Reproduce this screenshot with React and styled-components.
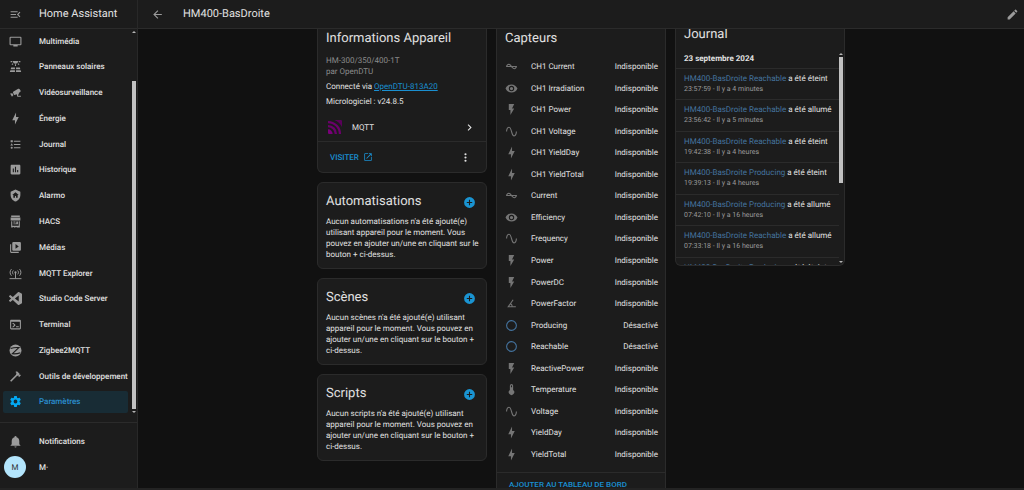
import React from 'react';
import styled, { createGlobalStyle } from 'styled-components';

const icons = {
  menuOpen: 'M21,15.61L19.59,17L14.58,12L19.59,7L21,8.39L17.44,12L21,15.61M3,6H16V8H3V6M3,13V11H13V13H3M3,18V16H16V18H3Z',
  arrowLeft: 'M20,11V13H8L13.5,18.5L12.08,19.92L4.16,12L12.08,4.08L13.5,5.5L8,11H20Z',
  pencil: 'M20.71,7.04C21.1,6.65 21.1,6 20.71,5.63L18.37,3.29C18,2.9 17.35,2.9 16.96,3.29L15.12,5.12L18.87,8.87M3,17.25V21H6.75L17.81,9.93L14.06,6.18L3,17.25Z',
  television: 'M21,17H3V5H21M21,3H3A2,2 0 0,0 1,5V17A2,2 0 0,0 3,19H8V21H16V19H21A2,2 0 0,0 23,17V5A2,2 0 0,0 21,3Z',
  solar: 'M4 14H11V17H3L4 14M13 14H20L21 17H13V14M2.500 19H11V22H1.500L2.500 19M13 19H21.500L22.500 22H13V19M11 8H13V11H11V8M15.76 7.21L17.18 5.79L19.3 7.91L17.89 9.33L15.76 7.21M4.71 7.91L6.83 5.79L8.24 7.21L6.12 9.33L4.71 7.91M3 2H6V4H3V2M18 2H21V4H18V2M12 7C14.76 7 17 4.76 17 2H7C7 4.76 9.24 7 12 7Z',
  cctv: 'M18.15,4.94C17.77,4.91 17.37,5 17,5.2L8.35,10.2C7.39,10.76 7.07,12 7.62,12.94L9.12,15.53C9.67,16.5 10.89,16.82 11.85,16.27L13.65,15.23C13.92,15.69 14.32,16.06 14.81,16.27V18.04C14.81,19.13 15.7,20 16.81,20H22V18.04H16.81V16.27C17.72,15.87 18.31,14.97 18.31,14C18.31,13.54 18.19,13.11 17.97,12.73L20.5,11.27C21.47,10.71 21.8,9.5 21.24,8.53L19.74,5.94C19.4,5.34 18.79,5 18.15,4.94M6.22,13.17L2,13.87L2.75,15.17L4.75,18.63L5.5,19.93L8.22,16.63L6.22,13.17Z',
  bolt: 'M11 15H6L13 1V9H18L11 23V15Z',
  list: 'M5,9.5L7.5,14H2.5L5,9.5M3,4H7V8H3V4M5,20A2,2 0 0,0 7,18A2,2 0 0,0 5,16A2,2 0 0,0 3,18A2,2 0 0,0 5,20M9,5V7H21V5H9M9,19H21V17H9V19M9,13H21V11H9V13Z',
  chart: 'M9 17H7V10H9V17M13 17H11V7H13V17M17 17H15V13H17V17M19 3H5C3.9 3 3 3.9 3 5V19C3 20.1 3.9 21 5 21H19C20.1 21 21 20.1 21 19V5C21 3.9 20.1 3 19 3Z',
  shield: 'M11,13H13V16H16V11H18L12,6L6,11H8V16H11V13M12,1L21,5V11C21,16.55 17.16,21.74 12,23C6.84,21.74 3,16.55 3,11V5L12,1Z',
  hacs: 'M4,1H20V3.5H4V1M3,4.5H21V10H3V4.5M4,11.5H6V20H18V11.5H20V22H4V11.5M8,12H12V14H8V12M13.5,12H16.5V17H8V15.5H13.5V12M4,23H7V24H4V23M9,23H12V24H9V23M14,23H20V24H14V23Z',
  media: 'M4,6H2V20A2,2 0 0,0 4,22H18V20H4V6M20,2H8A2,2 0 0,0 6,4V16A2,2 0 0,0 8,18H20A2,2 0 0,0 22,16V4A2,2 0 0,0 20,2M12,14.5V5.5L18,10L12,14.5Z',
  code: 'M23.15 2.587L18.21 .21a1.494 1.494 0 0 0-1.705.29l-9.46 8.63-4.12-3.128a.999.999 0 0 0-1.276.057L.327 7.261A1 1 0 0 0 .326 8.74L3.899 12 .326 15.26a1 1 0 0 0 .001 1.479L1.65 17.94a.999.999 0 0 0 1.276.057l4.12-3.128 9.46 8.63a1.492 1.492 0 0 0 1.704.29l4.942-2.377A1.5 1.5 0 0 0 24 20.06V3.939a1.5 1.5 0 0 0-.85-1.352zm-5.146 14.861L10.826 12l7.178-5.448v10.896z',
  console: 'M20,19V7H4V19H20M20,3A2,2 0 0,1 22,5V19A2,2 0 0,1 20,21H4A2,2 0 0,1 2,19V5C2,3.89 2.9,3 4,3H20M13,17V15H18V17H13M9.58,13L5.57,9H8.4L11.7,12.3C12.09,12.69 12.09,13.33 11.7,13.72L8.42,17H5.59L9.58,13Z',
  hammer: 'M2,19.63L13.43,8.2L12.72,7.5L14.14,6.07L12,3.89C13.2,2.7 15.09,2.7 16.27,3.89L19.87,7.5L18.45,8.91H21.29L22,9.62L18.45,13.21L17.74,12.5V9.62L16.27,11.04L15.56,10.33L4.13,21.76L2,19.63Z',
  cog: 'M12,15.5A3.5,3.5 0 0,1 8.5,12A3.5,3.5 0 0,1 12,8.5A3.5,3.5 0 0,1 15.5,12A3.5,3.5 0 0,1 12,15.5M19.43,12.97C19.47,12.65 19.5,12.33 19.5,12C19.5,11.67 19.47,11.34 19.43,11L21.54,9.37C21.73,9.22 21.78,8.95 21.66,8.73L19.66,5.27C19.54,5.05 19.27,4.96 19.05,5.05L16.56,6.05C16.04,5.66 15.5,5.32 14.87,5.07L14.5,2.42C14.46,2.18 14.25,2 14,2H10C9.75,2 9.54,2.18 9.5,2.42L9.13,5.07C8.5,5.32 7.96,5.66 7.44,6.05L4.95,5.05C4.73,4.96 4.46,5.05 4.34,5.27L2.34,8.73C2.21,8.95 2.27,9.22 2.46,9.37L4.57,11C4.53,11.34 4.5,11.67 4.5,12C4.5,12.33 4.53,12.65 4.57,12.97L2.46,14.63C2.27,14.78 2.21,15.05 2.34,15.27L4.34,18.73C4.46,18.95 4.73,19.03 4.95,18.95L7.44,17.94C7.96,18.34 8.5,18.68 9.13,18.93L9.5,21.58C9.54,21.82 9.75,22 10,22H14C14.25,22 14.46,21.82 14.5,21.58L14.87,18.93C15.5,18.67 16.04,18.34 16.56,17.94L19.05,18.95C19.27,19.03 19.54,18.95 19.66,18.73L21.66,15.27C21.78,15.05 21.73,14.78 21.54,14.63L19.43,12.97Z',
  bell: 'M21,19V20H3V19L5,17V11C5,7.9 7.03,5.17 10,4.29C10,4.19 10,4.1 10,4A2,2 0 0,1 12,2A2,2 0 0,1 14,4C14,4.1 14,4.19 14,4.29C16.97,5.17 19,7.9 19,11V17L21,19M14,21A2,2 0 0,1 12,23A2,2 0 0,1 10,21',
  current: 'M12.43 11C12.28 10.84 10 7 7 7S2.32 10.18 2 11V13H11.57C11.72 13.16 14 17 17 17S21.68 13.82 22 13V11H12.43M7 9C8.17 9 9.18 9.85 10 11H4.31C4.78 10.17 5.54 9 7 9M17 15C15.83 15 14.82 14.15 14 13H19.69C19.22 13.83 18.46 15 17 15Z',
  eye: 'M12,9A3,3 0 0,0 9,12A3,3 0 0,0 12,15A3,3 0 0,0 15,12A3,3 0 0,0 12,9M12,17A5,5 0 0,1 7,12A5,5 0 0,1 12,7A5,5 0 0,1 17,12A5,5 0 0,1 12,17M12,4.5C7,4.5 2.73,7.61 1,12C2.73,16.39 7,19.5 12,19.5C17,19.5 21.27,16.39 23,12C21.27,7.61 17,4.5 12,4.5Z',
  flash: 'M7,2V13H10V22L17,10H13L17,2H7Z',
  sine: 'M16.5,21C13.5,21 12.31,16.76 11.05,12.28C10.14,9.04 9,5 7.5,5C4.11,5 4,11.93 4,12H2C2,11.63 2.06,3 7.5,3C10.5,3 11.71,7.25 12.97,11.74C13.83,14.8 15,19 16.5,19C19.94,19 20.03,12.07 20.03,12H22.03C22.03,12.37 21.97,21 16.5,21Z',
  angle: 'M20,19H4.09L14.18,4.43L15.82,5.57L11.28,12.13C12.89,12.96 14,14.62 14,16.54C14,16.7 14,16.85 13.97,17H20V19M7.91,17H11.96C12,16.85 12,16.7 12,16.54C12,15.28 11.24,14.22 10.14,13.78L7.91,17Z',
  circle: 'M12,20A8,8 0 0,1 4,12A8,8 0 0,1 12,4A8,8 0 0,1 20,12A8,8 0 0,1 12,20M12,2A10,10 0 0,0 2,12A10,10 0 0,0 12,22A10,10 0 0,0 22,12A10,10 0 0,0 12,2Z',
  thermometer: 'M15 13V5A3 3 0 0 0 9 5V13A5 5 0 1 0 15 13M12 4A1 1 0 0 1 13 5V8H11V5A1 1 0 0 1 12 4Z',
  open: 'M14,3V5H17.59L7.76,14.83L9.17,16.24L19,6.41V10H21V3M19,19H5V5H12V3H5C3.89,3 3,3.9 3,5V19A2,2 0 0,0 5,21H19A2,2 0 0,0 21,19V12H19V19Z',
  plus: 'M17,13H13V17H11V13H7V11H11V7H13V11H17M12,2A10,10 0 0,0 2,12A10,10 0 0,0 12,22A10,10 0 0,0 22,12A10,10 0 0,0 12,2Z',
  chevron: 'M8.59,16.58L13.17,12L8.59,7.41L10,6L16,12L10,18L8.59,16.58Z',
  dots: 'M12,16A2,2 0 0,1 14,18A2,2 0 0,1 12,20A2,2 0 0,1 10,18A2,2 0 0,1 12,16M12,10A2,2 0 0,1 14,12A2,2 0 0,1 12,14A2,2 0 0,1 10,12A2,2 0 0,1 12,10M12,4A2,2 0 0,1 14,6A2,2 0 0,1 12,8A2,2 0 0,1 10,6A2,2 0 0,1 12,4Z',
};

const GlobalStyle = createGlobalStyle`
  * { box-sizing: border-box; }
  body {
    margin: 0;
    background: #111111;
    color: #e1e1e1;
    font-family: Roboto, "Noto Sans", sans-serif;
    font-size: 8px;
    line-height: 11px;
    text-rendering: geometricPrecision;
  }
  h1, h2, h3, p, ul { margin: 0; padding: 0; }
  ul { list-style: none; }
  a { color: inherit; text-decoration: none; }
  button {
    display: flex;
    align-items: center;
    padding: 0;
    border: 0;
    background: none;
    color: inherit;
    font: inherit;
    cursor: pointer;
  }
`;

const Svg = styled.svg`
  flex: none;
  display: block;
  width: ${({ $size }) => $size || 13}px;
  height: ${({ $size }) => $size || 13}px;
  fill: currentColor;
`;

const Page = styled.div`
  display: flex;
  height: 100vh;
  border-bottom: 2px solid #232323;
  overflow: hidden;
`;

const Sidebar = styled.aside`
  flex: none;
  display: flex;
  flex-direction: column;
  width: 138px;
  background: #1c1c1c;
  border-right: 1px solid #282828;
`;

const Bar = styled.header`
  flex: none;
  display: flex;
  align-items: center;
  gap: ${({ $gap }) => $gap}px;
  height: 29px;
  padding: 0 5px 0 ${({ $left }) => $left}px;
  background: #1c1c1c;
  border-bottom: 1px solid #2b2b2b;
  color: #9b9b9b;
`;

const BarTitle = styled.h1`
  flex: 1;
  color: #e1e1e1;
  font-size: 11px;
  font-weight: 400;
  line-height: 16px;
  white-space: nowrap;
`;

const NavBody = styled.div`
  flex: 1;
  display: flex;
  min-height: 0;
  margin: 0 1px 7px 0;
`;

const NavList = styled.ul`
  flex: 1;
  display: flex;
  flex-direction: column;
  justify-content: space-between;
  padding: 1px 4px 2px 3px;
`;

const NavLink = styled.a`
  display: flex;
  align-items: center;
  gap: 17px;
  height: 22px;
  padding-left: 6px;
  border-radius: 2px;
  background: ${({ $active }) => ($active ? '#182c35' : 'none')};
  color: ${({ $active }) => ($active ? '#03a9f4' : '#9b9b9b')};
  white-space: nowrap;
`;

const NavLabel = styled.span`
  color: ${({ $active }) => ($active ? '#2b8fd0' : '#e1e1e1')};
  font-weight: 500;
`;

const SidebarFooter = styled.ul`
  flex: none;
  display: grid;
  gap: 4px;
  padding: 7px 3px 10px;
  border-top: 1px solid #2b2b2b;
`;

const UserLink = styled(NavLink)`
  gap: 13px;
  padding-left: 1px;
`;

const Avatar = styled.span`
  display: grid;
  place-items: center;
  width: 22px;
  height: 22px;
  border-radius: 50%;
  background: #b3e5fc;
  color: #333333;
`;

const Track = styled.div`
  flex: none;
  display: flex;
  flex-direction: column;
  gap: 1px;
  width: 4px;
  padding: 2px 0;
`;

const Arrow = styled.svg`
  flex: none;
  display: block;
  width: 4px;
  height: 2px;
  fill: #b5b5b5;
`;

const Before = styled.div`
  flex: ${({ $grow }) => $grow};
`;

const Thumb = styled.div`
  flex: ${({ $grow }) => $grow};
  background: #c1c1c1;
`;

const Main = styled.main`
  flex: 1;
  display: flex;
  flex-direction: column;
  min-width: 0;
`;

const IconButton = styled.button`
  flex: none;
  color: ${({ $color }) => $color || 'inherit'};
`;

const Columns = styled.div`
  flex: 1;
  display: grid;
  grid-template-columns: repeat(3, minmax(0, 1fr));
  gap: 9px;
  align-items: start;
  width: 100%;
  max-width: 528px;
  min-height: 0;
  margin: 0 auto;
  overflow: hidden;
`;

const Column = styled.div`
  display: grid;
  gap: 9px;
`;

const Card = styled.section`
  background: #1c1c1c;
  border: 1px solid #2b2b2b;
  border-radius: 6px;
  overflow: hidden;
`;

/* scrolled partly under the app bar, so its top edge is cut */
const CutCard = styled(Card)`
  border-top: 0;
  border-top-left-radius: 0;
  border-top-right-radius: 0;
`;

const CardTitle = styled.h2`
  font-size: 13px;
  font-weight: 400;
  line-height: 18px;
`;

const InfoBody = styled.div`
  display: grid;
  gap: 4px;
  padding: 1px 8px 0;
`;

const Model = styled.p`
  margin-top: 3px;
  color: #8b8b8b;
`;

const DeviceLink = styled.a`
  color: #1a8fd0;
  text-decoration: underline;
`;

const Integration = styled.a`
  display: flex;
  align-items: center;
  gap: 10px;
  height: 28px;
  margin-top: 6px;
  padding: 0 10px;
`;

const Grow = styled.span`
  flex: 1;
`;

const CardActions = styled.div`
  display: flex;
  align-items: center;
  justify-content: space-between;
  height: 31px;
  padding: 0 14px 0 12px;
  border-top: 1px solid #2b2b2b;
`;

const ActionLink = styled.a`
  display: flex;
  align-items: center;
  gap: 4px;
  color: #1a8fd0;
  font-weight: 500;
  text-transform: uppercase;
`;

const EmptyCard = styled(Card)`
  padding: 10px 2px 8px 8px;
`;

const EmptyHead = styled.div`
  display: flex;
  align-items: center;
  justify-content: space-between;
  padding-right: 8px;
  margin-bottom: 5px;
`;

const Sensors = styled(CutCard)`
  display: flex;
  flex-direction: column;
`;

const SensorTitle = styled(CardTitle)`
  padding: 1px 8px 0;
`;

const SensorList = styled.ul`
  display: grid;
  grid-auto-rows: 1fr;
  height: 409px;
  margin: 8px 7px 7px 8px;
`;

const Sensor = styled.li`
  display: flex;
  align-items: center;
  gap: 13px;
  color: ${({ $off }) => ($off ? '#44739e' : '#757575')};
`;

const SensorText = styled.span`
  flex: ${({ $grow }) => ($grow ? 1 : 'none')};
  color: #e1e1e1;
`;

const AddRow = styled.div`
  display: flex;
  align-items: center;
  height: 24px;
  padding: 0 12px;
  border-top: 1px solid #2b2b2b;
`;

const LogTitle = styled(CardTitle)`
  padding: 0 8px;
  line-height: 12px;
  margin-bottom: 10px;
`;

const LogBody = styled.div`
  display: flex;
  height: 214px;
  padding-right: 1px;
`;

const LogList = styled.div`
  flex: 1;
  min-width: 0;
  overflow: hidden;
`;

const LogDate = styled.h3`
  padding: 2px 8px 4px;
  font-size: 8px;
  font-weight: 700;
`;

const LogEntries = styled.ul`
  display: grid;
  grid-auto-rows: 1fr;
  height: 220px;
`;

const LogEntry = styled.li`
  padding: 4px 8px 0;
  border-top: 1px solid #2b2b2b;
  white-space: nowrap;
`;

const LogEntity = styled.a`
  color: #44739e;
`;

const LogTime = styled.p`
  color: #9b9b9b;
  font-size: 7px;
`;

const Icon = ({ name, size }) => (
  <Svg $size={size} viewBox="0 0 24 24" aria-hidden="true"><path d={icons[name]} fillRule="evenodd" /></Svg>
);

const AntennaIcon = () => (
  <Svg viewBox="0 0 24 24" aria-hidden="true">
    <g fill="none" stroke="currentColor" strokeWidth="1.8">
      <path d="M4.5,4C1.2,7.5 1.2,12.5 4.5,16M8,6.5C6,8.6 6,11.4 8,13.5M16,6.5C18,8.6 18,11.4 16,13.5M19.5,4C22.8,7.5 22.8,12.5 19.5,16" />
      <path d="M12,11V21M1,21.5H23" />
    </g>
    <circle cx="12" cy="10" r="2" />
  </Svg>
);

const ZigbeeIcon = () => (
  <Svg viewBox="0 0 24 24" aria-hidden="true">
    <circle cx="12" cy="12" r="11" />
    <path d="M3,8.5C8,6.5 13,6 18.5,6.500L6,18C11,18.5 16,18 21,16" fill="none" stroke="#1c1c1c" strokeWidth="2" />
  </Svg>
);

const MqttIcon = () => (
  <Svg $size={14} viewBox="0 0 24 24" aria-hidden="true">
    <path d="M0,16A8,8 0 0 1 8,24H2A2,2 0 0 1 0,22Z" fill="#7a007a" />
    <path d="M0,10.5A13.5,13.5 0 0 1 13.5,24M0,3.5A20.5,20.5 0 0 1 20.5,24" fill="none" stroke="#6b006b" strokeWidth="4" />
    <path d="M11,0H22A2,2 0 0 1 24,2V12A25,25 0 0 0 11,0Z" fill="#5a005a" />
  </Svg>
);

const ScrollBar = ({ before, thumb, after }) => (
  <Track>
    <Arrow viewBox="0 0 4 2"><path d="M0,2L2,0L4,2Z" /></Arrow>
    <Before $grow={before} />
    <Thumb $grow={thumb} />
    <Before $grow={after} />
    <Arrow viewBox="0 0 4 2"><path d="M0,0L2,2L4,0Z" /></Arrow>
  </Track>
);

const navItems = [
  ['Multimédia', 'television'],
  ['Panneaux solaires', 'solar'],
  ['Vidéosurveillance', 'cctv'],
  ['Énergie', 'bolt'],
  ['Journal', 'list'],
  ['Historique', 'chart'],
  ['Alarmo', 'shield'],
  ['HACS', 'hacs'],
  ['Médias', 'media'],
  ['MQTT Explorer', 'antenna'],
  ['Studio Code Server', 'code'],
  ['Terminal', 'console'],
  ['Zigbee2MQTT', 'zigbee'],
  ['Outils de développement', 'hammer'],
  ['Paramètres', 'cog'],
];

const sensors = [
  ['CH1 Current', 'current'],
  ['CH1 Irradiation', 'eye'],
  ['CH1 Power', 'flash'],
  ['CH1 Voltage', 'sine'],
  ['CH1 YieldDay', 'bolt'],
  ['CH1 YieldTotal', 'bolt'],
  ['Current', 'current'],
  ['Efficiency', 'eye'],
  ['Frequency', 'sine'],
  ['Power', 'flash'],
  ['PowerDC', 'flash'],
  ['PowerFactor', 'angle'],
  ['Producing', 'circle'],
  ['Reachable', 'circle'],
  ['ReactivePower', 'flash'],
  ['Temperature', 'thermometer'],
  ['Voltage', 'sine'],
  ['YieldDay', 'bolt'],
  ['YieldTotal', 'bolt'],
];

const logs = [
  ['Reachable', 'a été éteint', '23:57:59 - Il y a 4 minutes'],
  ['Reachable', 'a été allumé', '23:56:42 - Il y a 5 minutes'],
  ['Reachable', 'a été éteint', '19:42:38 - Il y a 4 heures'],
  ['Producing', 'a été éteint', '19:39:13 - Il y a 4 heures'],
  ['Producing', 'a été allumé', '07:42:10 - Il y a 16 heures'],
  ['Reachable', 'a été allumé', '07:33:18 - Il y a 16 heures'],
  ['Producing', 'a été éteint', '07:33:18 - Il y a 16 heures'],
];

const emptyCards = [
  ['Automatisations', 'automatisations'],
  ['Scènes', 'scènes'],
  ['Scripts', 'scripts'],
];

const NavIcon = ({ name }) => {
  if (name === 'antenna') return <AntennaIcon />;
  if (name === 'zigbee') return <ZigbeeIcon />;
  return <Icon name={name} />;
};

const Navigation = () => (
  <Sidebar>
    <Bar as="div" $gap={17} $left={9}>
      <IconButton aria-label="Menu"><Icon name="menuOpen" /></IconButton>
      <BarTitle as="span">Home Assistant</BarTitle>
    </Bar>
    <NavBody>
      <NavList>
        {navItems.map(([label, icon]) => {
          const active = label === 'Paramètres';
          return (
            <li key={label}>
              <NavLink href="#" $active={active}>
                <NavIcon name={icon} />
                <NavLabel $active={active}>{label}</NavLabel>
              </NavLink>
            </li>
          );
        })}
      </NavList>
      <ScrollBar before={46} thumb={330} after={0} />
    </NavBody>
    <SidebarFooter>
      <li><NavLink href="#"><Icon name="bell" /><NavLabel>Notifications</NavLabel></NavLink></li>
      <li><UserLink href="#"><Avatar>M</Avatar><NavLabel>M·</NavLabel></UserLink></li>
    </SidebarFooter>
  </Sidebar>
);

const DeviceInfo = () => (
  <CutCard>
    <InfoBody>
      <CardTitle>Informations Appareil</CardTitle>
      <Model>
        HM-300/350/400-1T
        <br />
        par OpenDTU
      </Model>
      <p>
        Connecté via
        {' '}
        <DeviceLink href="#">OpenDTU-813A20</DeviceLink>
      </p>
      <p>Micrologiciel : v24.8.5</p>
    </InfoBody>
    <Integration href="#">
      <MqttIcon />
      <Grow>MQTT</Grow>
      <Icon name="chevron" />
    </Integration>
    <CardActions>
      <ActionLink href="#">
        Visiter
        <Icon name="open" size={10} />
      </ActionLink>
      <IconButton aria-label="Plus d'options"><Icon name="dots" /></IconButton>
    </CardActions>
  </CutCard>
);

const App = () => (
  <Page>
    <GlobalStyle />
    <Navigation />
    <Main>
      <Bar $gap={19} $left={13}>
        <IconButton aria-label="Retour"><Icon name="arrowLeft" /></IconButton>
        <BarTitle>HM400-BasDroite</BarTitle>
        <IconButton aria-label="Modifier"><Icon name="pencil" /></IconButton>
      </Bar>
      <Columns>
        <Column>
          <DeviceInfo />
          {emptyCards.map(([title, kind]) => (
            <EmptyCard key={title}>
              <EmptyHead>
                <CardTitle>{title}</CardTitle>
                <IconButton $color="#1a94d2" aria-label={`Ajouter ${kind}`}><Icon name="plus" /></IconButton>
              </EmptyHead>
              <p>
                {`Aucun ${kind} n'a été ajouté(e) utilisant appareil pour le moment. Vous pouvez en ajouter un/une en cliquant sur le bouton + ci-dessus.`}
              </p>
            </EmptyCard>
          ))}
        </Column>
        <Sensors>
          <SensorTitle>Capteurs</SensorTitle>
          <SensorList>
            {sensors.map(([name, icon]) => {
              const off = icon === 'circle';
              return (
                <Sensor key={name} $off={off}>
                  <Icon name={icon} />
                  <SensorText $grow>{name}</SensorText>
                  <SensorText>{off ? 'Désactivé' : 'Indisponible'}</SensorText>
                </Sensor>
              );
            })}
          </SensorList>
          <AddRow>
            <ActionLink as="button">Ajouter au tableau de bord</ActionLink>
          </AddRow>
        </Sensors>
        <CutCard>
          <LogTitle>Journal</LogTitle>
          <LogBody>
            <LogList>
              <LogDate>23 septembre 2024</LogDate>
              <LogEntries>
                {logs.map(([entity, state, time]) => (
                  <LogEntry key={entity + state + time}>
                    <p>
                      <LogEntity href="#">{`HM400-BasDroite ${entity}`}</LogEntity>
                      {` ${state}`}
                    </p>
                    <LogTime>{time}</LogTime>
                  </LogEntry>
                ))}
              </LogEntries>
            </LogList>
            <ScrollBar before={0} thumb={127} after={76} />
          </LogBody>
        </CutCard>
      </Columns>
    </Main>
  </Page>
);

export default App;
